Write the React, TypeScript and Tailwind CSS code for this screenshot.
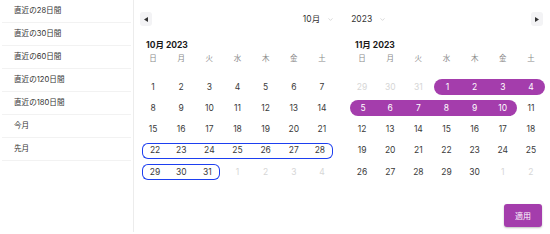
import { ChevronDown } from "lucide-react";

type Cell = { day: number; out: boolean; date: number };

const PRESETS = ["直近の28日間", "直近の30日間", "直近の60日間", "直近の120日間", "直近の180日間", "今月", "先月"];
const WEEKDAYS = ["日", "月", "火", "水", "木", "金", "土"];

function buildWeeks(year: number, month: number): Cell[][] {
  const first = new Date(year, month, 1);
  const start = new Date(year, month, 1 - first.getDay());
  const weeks: Cell[][] = [];
  const cur = new Date(start);
  while (weeks.length < 6) {
    const week: Cell[] = [];
    for (let i = 0; i < 7; i++) {
      week.push({ day: cur.getDate(), out: cur.getMonth() !== month, date: cur.getTime() });
      cur.setDate(cur.getDate() + 1);
    }
    weeks.push(week);
    if (cur.getMonth() !== month) break;
  }
  return weeks;
}

const compareFrom = new Date(2023, 9, 22).getTime();
const compareTo = new Date(2023, 9, 31).getTime();
const selFrom = new Date(2023, 10, 1).getTime();
const selTo = new Date(2023, 10, 10).getTime();

function kindOf(c: Cell): "sel" | "cmp" | null {
  if (c.out) return null;
  if (c.date >= selFrom && c.date <= selTo) return "sel";
  if (c.date >= compareFrom && c.date <= compareTo) return "cmp";
  return null;
}

function Month({ year, month }: { year: number; month: number }) {
  const weeks = buildWeeks(year, month);
  return (
    <div className="w-[197px]">
      <div className="flex h-[14px] items-center pl-[7px] text-[8.5px] font-bold text-[#1a1a1a]">
        {month + 1}月 {year}
      </div>
      <div className="grid h-[14px] grid-cols-7 items-center">
        {WEEKDAYS.map((w) => (
          <div key={w} className="text-center text-[7.5px] text-[#8a8a8a]">
            {w}
          </div>
        ))}
      </div>
      <div className="mt-[10.3px]">
        {weeks.map((week, wi) => (
          <div key={wi} className="grid h-[21.3px] grid-cols-7 items-center">
            {week.map((c, i) => {
              const k = kindOf(c);
              const prev = i > 0 ? kindOf(week[i - 1]) : null;
              const next = i < 6 ? kindOf(week[i + 1]) : null;
              const isStart = k !== null && prev !== k;
              const isEnd = k !== null && next !== k;
              let band = "";
              if (k === "sel") {
                band = "bg-[#a43dac] text-white";
                if (isStart) band += " rounded-l-full ml-[2px]";
                if (isEnd) band += " rounded-r-full";
              } else if (k === "cmp") {
                band = "border-y-[1.5px] border-[#1d3ff0] text-[#3a3a3a]";
                if (isStart) band += " border-l-[1.5px] rounded-l-[6px] ml-[3px]";
                if (isEnd) band += " border-r-[1.5px] rounded-r-[6px] mr-[3px]";
              } else {
                band = c.out ? "text-[#d6d6d6]" : "text-[#3a3a3a]";
              }
              return (
                <div key={i} className={`flex h-[16px] items-center justify-center text-[8.5px] ${band}`}>
                  {c.day}
                </div>
              );
            })}
          </div>
        ))}
      </div>
    </div>
  );
}

export default function App() {
  return (
    <div
      className="flex h-[234px] w-[550px] bg-white"
      style={{ fontFamily: 'Inter, "Noto Sans CJK JP", sans-serif' }}
    >
      <aside className="h-[232px] w-[134px] border-r border-[#ececec]">
        {PRESETS.map((p) => (
          <div
            key={p}
            className="mx-[2px] flex h-[23px] items-center border-b border-[#f2f2f2] pl-[12px] text-[7.6px] text-[#333]"
          >
            {p}
          </div>
        ))}
      </aside>

      <main className="flex flex-1 flex-col px-[5px] pt-[12px]">
        <div className="flex h-[14px] items-center justify-between pl-[1px] pr-[2px]">
          <button className="flex h-[14px] w-[12px] items-center justify-center rounded-[3px] bg-[#f3f3f5]">
            <svg width="4" height="5" viewBox="0 0 4 5">
              <path d="M4 0 L0 2.5 L4 5 Z" fill="#333" />
            </svg>
          </button>
          <div className="ml-[6px] flex items-center gap-[17px] text-[8.5px] text-[#333]">
            <span className="flex items-center gap-[7px]">
              10月
              <ChevronDown className="h-[7px] w-[7px] text-[#aaa]" strokeWidth={1.5} />
            </span>
            <span className="flex items-center gap-[7px]">
              2023
              <ChevronDown className="h-[7px] w-[7px] text-[#aaa]" strokeWidth={1.5} />
            </span>
          </div>
          <button className="flex h-[14px] w-[12px] items-center justify-center rounded-[3px] bg-[#f3f3f5]">
            <svg width="4" height="5" viewBox="0 0 4 5">
              <path d="M0 0 L4 2.5 L0 5 Z" fill="#333" />
            </svg>
          </button>
        </div>

        <div className="mt-[12px] flex gap-[12px]">
          <Month year={2023} month={9} />
          <Month year={2023} month={10} />
        </div>

        <div className="mt-auto flex justify-end pb-[7px] pr-[3px]">
          <button className="h-[23px] w-[38px] rounded-[3px] bg-[#a43dac] text-[8px] text-white shadow-[0_1px_2px_rgba(0,0,0,0.25)]">
            適用
          </button>
        </div>
      </main>
    </div>
  );
}
